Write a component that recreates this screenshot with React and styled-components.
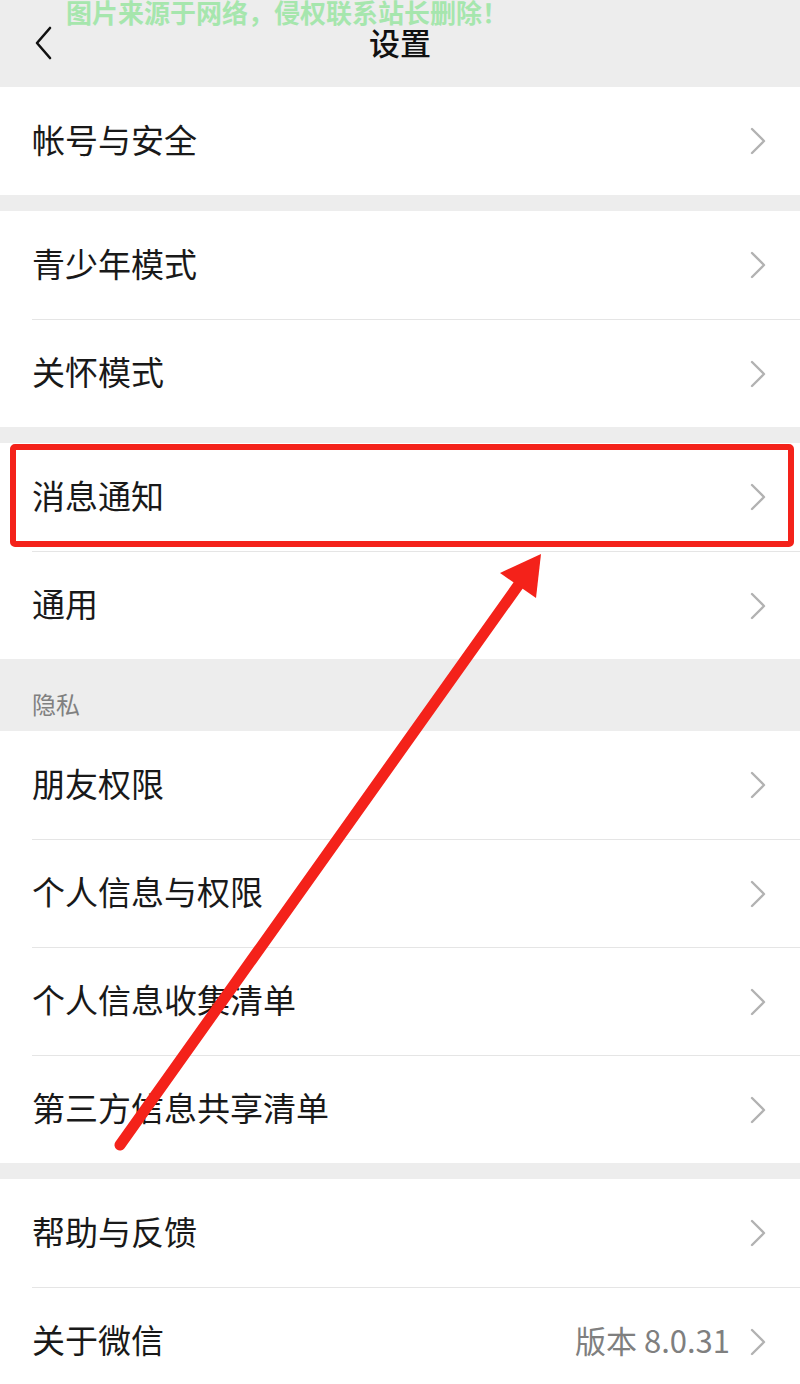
import styled, { createGlobalStyle } from "styled-components";

const GlobalStyle = createGlobalStyle`
  body {
    margin: 0;
    background: #ededed;
    font-family: "Noto Sans CJK SC", "Noto Sans", sans-serif;
  }
`;

const Page = styled.div`
  position: relative;
  width: 800px;
  height: 1384px;
  overflow: hidden;
  background: #ededed;
`;

const Header = styled.header`
  position: relative;
  height: 87px;
  display: flex;
  align-items: center;
  justify-content: center;
  background: #ededed;
`;

const BackButton = styled.button`
  position: absolute;
  left: 28px;
  top: 24px;
  width: 30px;
  height: 38px;
  padding: 0;
  border: none;
  background: none;
  display: flex;
  align-items: center;
  justify-content: center;
`;

const Title = styled.h1`
  margin: 0 0 4px;
  font-size: 31px;
  font-weight: 500;
  color: #111;
  line-height: 1;
`;

const Watermark = styled.div`
  position: absolute;
  left: 66px;
  top: 0;
  font-size: 26px;
  font-weight: 700;
  color: #a6e6ad;
  white-space: nowrap;
  line-height: 24px;
  height: 24px;
`;

const Group = styled.section`
  background: #fff;
  margin-top: ${(p) => (p.$gap ? "16px" : "0")};
`;

const SectionLabel = styled.div`
  height: 72px;
  padding: 0 32px 10px;
  box-sizing: border-box;
  display: flex;
  align-items: flex-end;
  font-size: 24px;
  color: #808080;
  background: #ededed;
`;

const Row = styled.div`
  position: relative;
  padding-left: 32px;
`;

const RowInner = styled.div`
  height: 108px;
  box-sizing: border-box;
  display: flex;
  align-items: center;
  padding-right: 34px;
  border-top: ${(p) => (p.$first ? "none" : "1px solid #e5e5e5")};
`;

const Label = styled.span`
  flex: 1;
  font-size: 33px;
  color: #191919;
  line-height: 1;
  margin-bottom: 4px;
`;

const Value = styled.span`
  font-size: 31px;
  color: #7f7f7f;
  margin-right: 20px;
  line-height: 1;
  margin-bottom: 4px;
`;

const Highlight = styled.div`
  position: absolute;
  left: 10px;
  right: 6px;
  top: 1px;
  bottom: 4px;
  border: 6px solid #f4221a;
  border-radius: 5px;
`;

const ArrowLayer = styled.svg`
  position: absolute;
  left: 0;
  top: 0;
  pointer-events: none;
`;

function Chevron() {
  return (
    <svg width="16" height="28" viewBox="0 0 16 28">
      <path d="M2 2 L14 14 L2 26" fill="none" stroke="#b2b2b2" strokeWidth="2.4" strokeLinecap="round" strokeLinejoin="round" />
    </svg>
  );
}

function Item({ label, value, first, highlight }) {
  return (
    <Row>
      <RowInner $first={first}>
        <Label>{label}</Label>
        {value && <Value>{value}</Value>}
        <Chevron />
      </RowInner>
      {highlight && <Highlight />}
    </Row>
  );
}

const groups = [
  { items: ["帐号与安全"] },
  { items: ["青少年模式", "关怀模式"], gap: true },
  { items: ["消息通知", "通用"], gap: true },
  { label: "隐私", items: ["朋友权限", "个人信息与权限", "个人信息收集清单", "第三方信息共享清单"] },
  { items: ["帮助与反馈", "关于微信"], gap: true },
];

export default function App() {
  return (
    <>
      <GlobalStyle />
      <Page>
        <Header>
          <Watermark>图片来源于网络，侵权联系站长删除！</Watermark>
          <BackButton aria-label="返回">
            <svg width="20" height="34" viewBox="0 0 20 34">
              <path d="M17 2 L4 17 L17 32" fill="none" stroke="#111" strokeWidth="2.6" strokeLinecap="round" strokeLinejoin="round" />
            </svg>
          </BackButton>
          <Title>设置</Title>
        </Header>

        {groups.map((g, gi) => (
          <div key={gi}>
            {g.label && <SectionLabel>{g.label}</SectionLabel>}
            <Group $gap={g.gap}>
              {g.items.map((label, i) => (
                <Item
                  key={label}
                  label={label}
                  first={i === 0}
                  highlight={label === "消息通知"}
                  value={label === "关于微信" ? "版本 8.0.31" : null}
                />
              ))}
            </Group>
          </div>
        ))}

        <ArrowLayer width="800" height="1384" viewBox="0 0 800 1384">
          <line x1="120" y1="1145" x2="522" y2="580" stroke="#f4221a" strokeWidth="11" strokeLinecap="round" />
          <polygon points="541,554 500,573 536,598" fill="#f4221a" />
        </ArrowLayer>
      </Page>
    </>
  );
}
